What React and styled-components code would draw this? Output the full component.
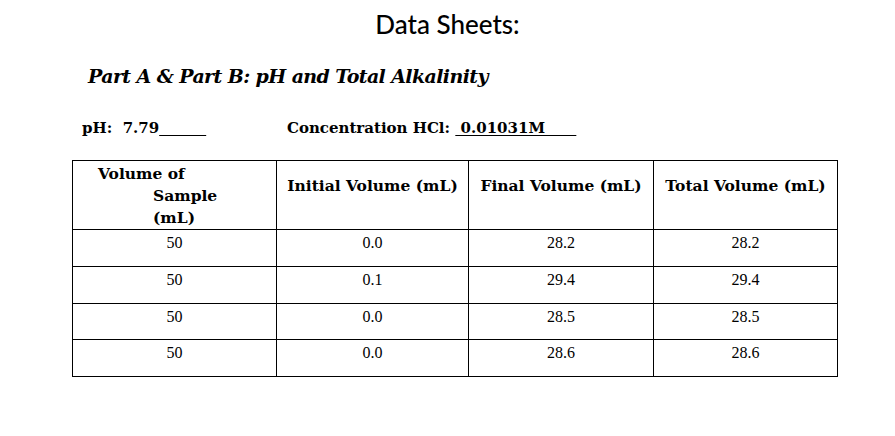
import React from 'react'
import styled, { createGlobalStyle } from 'styled-components'

const Global = createGlobalStyle`
body{
  margin:0;
  background:#fff;
  color:#000;
}
`

const Page = styled.div`
width:895px;
height:436px;
padding-top:8px;
box-sizing:border-box;
`

const Title = styled.h1`
margin:0;
text-align:center;
font-family: Lato, "Liberation Sans", sans-serif;
font-weight:500;
font-size:26px;
line-height:32px;
`

const SubTitle = styled.h2`
margin:23px 0 0 88px;
font-family:"DejaVu Serif", serif;
font-style:italic;
font-weight:700;
font-size:19px;
line-height:26px;
letter-spacing:-0.6px;
`

const InfoRow = styled.div`
display:flex;
margin:29px 0 0 82px;
font-family:"DejaVu Serif", serif;
font-weight:700;
font-size:15px;
line-height:20px;
`

const Field = styled.div`
width:${p => p.w}px;
white-space:pre;
`

const Blank = styled.span`
text-decoration:underline;
text-underline-offset:2px;
text-decoration-thickness:1px;
`

const Table = styled.table`
margin:22px 0 0 72px;
border-collapse:collapse;
table-layout:fixed;
width:765px;
`

const Head = styled.th`
border:1px solid #000;
height:69px;
box-sizing:border-box;
padding:${p => p.top ? '2px 0 0 25px' : '14px 0 0'};
vertical-align:top;
text-align:${p => p.top ? 'left' : 'center'};
font-family:"DejaVu Serif", serif;
font-weight:700;
font-size:15.5px;
line-height:22px;
white-space:nowrap;
`

const Indent = styled.span`
display:block;
padding-left:55px;
`

const Cell = styled.td`
border:1px solid #000;
height:${p => p.h}px;
box-sizing:border-box;
padding:3px 0 0;
vertical-align:top;
text-align:center;
font-family:"Liberation Serif", serif;
font-size:16px;
line-height:20px;
`

const rows = [
  ['50', '0.0', '28.2', '28.2'],
  ['50', '0.1', '29.4', '29.4'],
  ['50', '0.0', '28.5', '28.5'],
  ['50', '0.0', '28.6', '28.6'],
]

const heights = [37, 37, 36, 37]
const widths = [204, 192, 185, 184]

export default function App() {
  return (
    <Page>
      <Global />
      <Title>Data Sheets:</Title>
      <SubTitle>Part A &amp; Part B: pH and Total Alkalinity</SubTitle>
      <InfoRow>
        <Field w={205}>pH:  7.79<Blank>         </Blank></Field>
        <Field>Concentration HCl: <Blank> 0.01031M      </Blank></Field>
      </InfoRow>
      <Table>
        <colgroup>
          {widths.map((w, i) => <col key={i} style={{ width: w }} />)}
        </colgroup>
        <thead>
          <tr>
            <Head top>
              Volume of
              <Indent>Sample</Indent>
              <Indent>(mL)</Indent>
            </Head>
            <Head>Initial Volume (mL)</Head>
            <Head>Final Volume (mL)</Head>
            <Head>Total Volume (mL)</Head>
          </tr>
        </thead>
        <tbody>
          {rows.map((r, i) =>
            <tr key={i}>
              {r.map((v, j) => <Cell key={j} h={heights[i]}>{v}</Cell>)}
            </tr>
          )}
        </tbody>
      </Table>
    </Page>
  )
}
